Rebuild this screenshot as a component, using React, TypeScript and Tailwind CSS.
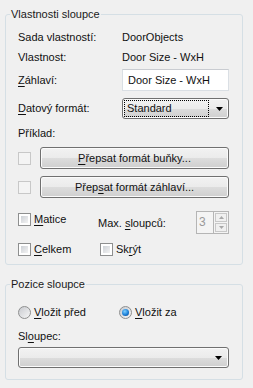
import type { ReactNode } from "react";

const Arrow = () => (
  <svg width="7" height="4" viewBox="0 0 7 4" className="shrink-0">
    <path d="M0 0h7L3.5 4z" fill="#000" />
  </svg>
);

const Box = ({ disabled }: { disabled?: boolean }) =>
  disabled ? (
    <span className="block w-[13px] h-[13px] border border-[#c8c8c8] bg-[#f4f4f4] shrink-0" />
  ) : (
    <span className="block w-[13px] h-[13px] border border-[#8e8f8f] bg-white p-[2px] shrink-0">
      <span className="block w-full h-full bg-[linear-gradient(135deg,#cdd1d6,#f3f3f3)]" />
    </span>
  );

const Radio = ({ checked }: { checked?: boolean }) => (
  <span className="flex items-center justify-center w-[13px] h-[13px] rounded-full border border-[#8e8f8f] bg-[linear-gradient(135deg,#c8cacf,#f6f6f6)] shrink-0">
    {checked && (
      <span className="block w-[7px] h-[7px] rounded-full bg-[radial-gradient(circle_at_40%_35%,#7fd0ff,#1b7fd8_55%,#0c3c78)]" />
    )}
  </span>
);

const Button = ({ children }: { children: ReactNode }) => (
  <div className="flex-1 h-[22px] flex items-center justify-center rounded-[3px] border border-[#707070] shadow-[inset_0_0_0_1px_#fbfbfb] bg-[linear-gradient(to_bottom,#f2f2f2_0%,#ebebeb_50%,#dddddd_50%,#cfcfcf_100%)]">
    {children}
  </div>
);

const U = ({ children }: { children: ReactNode }) => (
  <span className="underline underline-offset-[2px]">{children}</span>
);

export default function App() {
  return (
    <div className="w-[253px] h-[388px] bg-[#f0f0f0] pt-[8px] px-[5px] text-[11px] leading-[13px] text-[#111] font-['Liberation_Sans',Arial,sans-serif] overflow-hidden">
      <fieldset className="w-[238px] h-[257px] border border-[#d5dfe5] rounded-[3px] p-0 m-0">
        <legend className="ml-[4px] px-[1px] text-[#1a1a1a]">Vlastnosti sloupce</legend>
        <div className="pl-[12px] pr-[13px] pt-[6px]">
          <div className="flex h-[20px] items-center">
            <span className="w-[104px]">Sada vlastností:</span>
            <span>DoorObjects</span>
          </div>
          <div className="flex h-[20px] items-center">
            <span className="w-[104px]">Vlastnost:</span>
            <span>Door Size - WxH</span>
          </div>
          <div className="flex h-[22px] items-center mt-[2px]">
            <span className="w-[104px]">
              <U>Z</U>áhlaví:
            </span>
            <div className="flex-1 h-[22px] flex items-center pl-[5px] bg-white border border-[#dadfe4] border-t-[#c9ccd1]">
              Door Size - WxH
            </div>
          </div>
          <div className="flex h-[21px] items-center mt-[7px]">
            <span className="w-[104px]">
              <U>D</U>atový formát:
            </span>
            <div className="flex-1 h-[21px] flex items-center pl-[1px] pr-[5px] rounded-[3px] border border-[#707070] shadow-[inset_0_0_0_1px_#fbfbfb] bg-[linear-gradient(to_bottom,#f2f2f2_0%,#ebebeb_50%,#dddddd_50%,#cfcfcf_100%)]">
              <span className="w-[85px] h-[17px] flex items-center pl-[2px] border border-dotted border-black">
                Standard
              </span>
              <span className="flex-1" />
              <Arrow />
            </div>
          </div>
          <div className="flex h-[16px] items-center mt-[6px]">Příklad:</div>
          <div className="flex items-center gap-[9px] mt-[6px]">
            <Box disabled />
            <Button>
              <U>P</U>řepsat formát buňky...
            </Button>
          </div>
          <div className="flex items-center gap-[9px] mt-[7px]">
            <Box disabled />
            <Button>
              Přep<U>s</U>at formát záhlaví...
            </Button>
          </div>
          <div className="flex h-[23px] items-center mt-[13px]">
            <div className="w-[80px] h-[16px] self-start flex items-center gap-[3px]">
              <Box />
              <span>
                <U>M</U>atice
              </span>
            </div>
            <span className="flex-1 pt-[1px]">
              Max. <U>s</U>loupců:
            </span>
            <div className="w-[33px] h-[23px] flex border border-[#b5b5b5] bg-[#f4f4f4]">
              <span className="flex-1 flex items-center pl-[2px] text-[#9a9a9a] text-[12px]">3</span>
              <div className="w-[15px] flex flex-col gap-[1px] p-[1px] border-l border-[#b5b5b5]">
                <span className="flex-1 flex items-center justify-center border border-[#c8c8c8] bg-[#f0f0f0]">
                  <svg width="5" height="3" viewBox="0 0 5 3">
                    <path d="M0 3h5L2.5 0z" fill="#a8a8a8" />
                  </svg>
                </span>
                <span className="flex-1 flex items-center justify-center border border-[#c8c8c8] bg-[#f0f0f0]">
                  <svg width="5" height="3" viewBox="0 0 5 3">
                    <path d="M0 0h5L2.5 3z" fill="#a8a8a8" />
                  </svg>
                </span>
              </div>
            </div>
          </div>
          <div className="flex h-[16px] items-center mt-[7px]">
            <div className="w-[82px] flex items-center gap-[3px]">
              <Box />
              <span>
                <U>C</U>elkem
              </span>
            </div>
            <div className="flex items-center gap-[3px]">
              <Box />
              <span>
                Sk<U>r</U>ýt
              </span>
            </div>
          </div>
        </div>
      </fieldset>

      <fieldset className="w-[238px] h-[102px] mt-[13px] border border-[#d5dfe5] rounded-[3px] p-0 m-0">
        <legend className="ml-[4px] px-[1px] text-[#1a1a1a]">Pozice sloupce</legend>
        <div className="pl-[12px] pr-[13px] pt-[13px]">
          <div className="flex h-[16px] items-center">
            <div className="w-[101px] flex items-center gap-[3px]">
              <Radio />
              <span>
                <U>V</U>ložit před
              </span>
            </div>
            <div className="flex items-center gap-[3px]">
              <Radio checked />
              <span>
                <U>V</U>ložit za
              </span>
            </div>
          </div>
          <div className="flex h-[16px] items-center mt-[8px]">
            Sl<U>o</U>upec:
          </div>
          <div className="h-[21px] mt-[3px] flex items-center justify-end pr-[6px] rounded-[3px] border border-[#707070] shadow-[inset_0_0_0_1px_#fbfbfb] bg-[linear-gradient(to_bottom,#f2f2f2_0%,#ebebeb_50%,#dddddd_50%,#cfcfcf_100%)]">
            <Arrow />
          </div>
        </div>
      </fieldset>
    </div>
  );
}
